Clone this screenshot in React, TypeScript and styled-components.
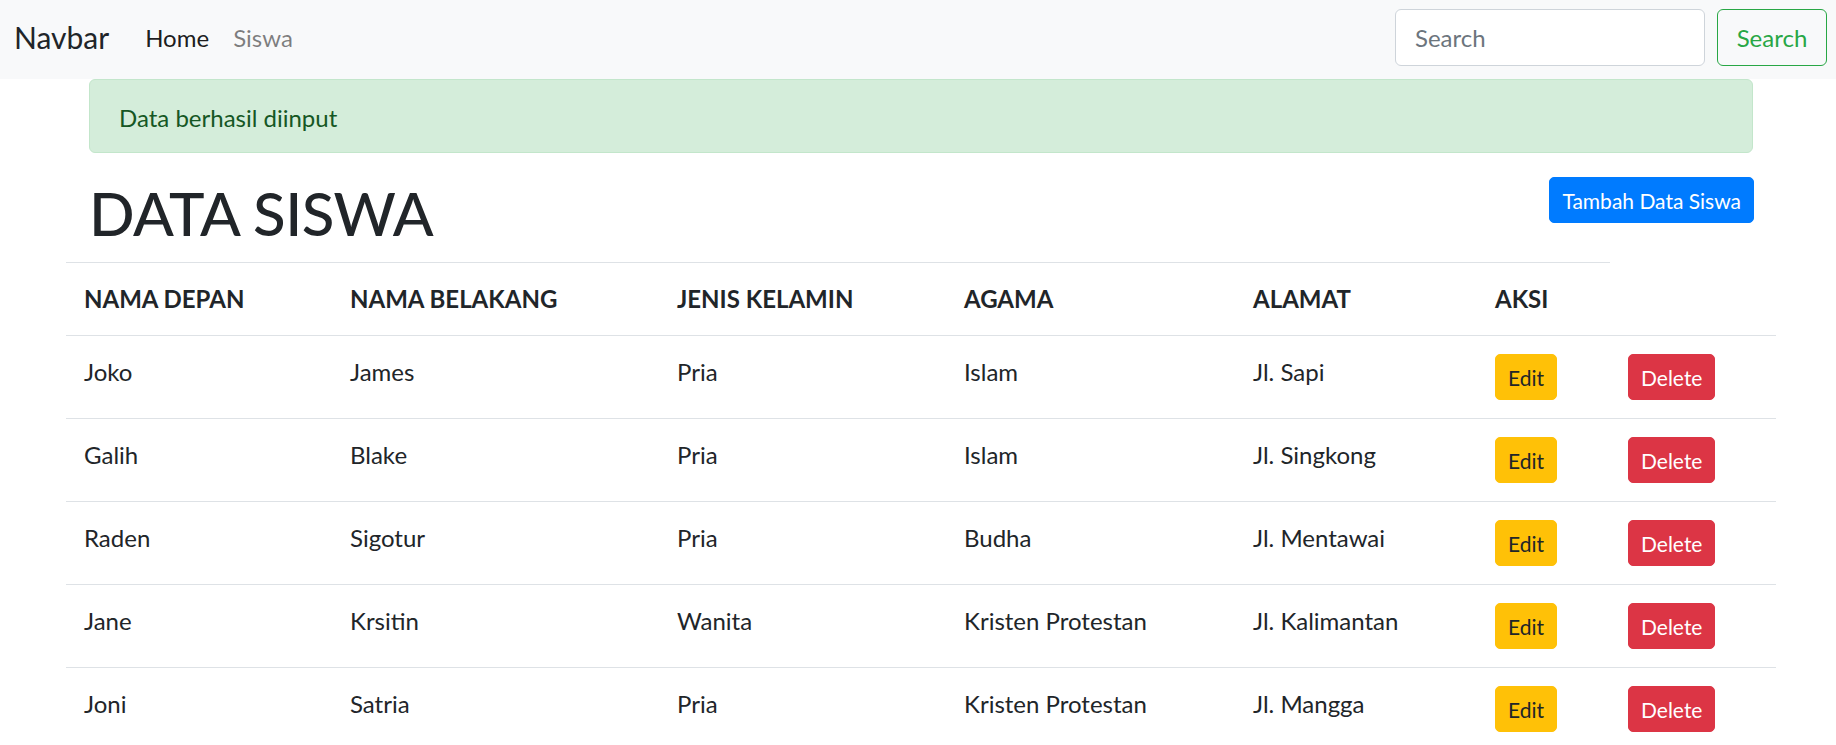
import React from "react";
import styled, { createGlobalStyle } from "styled-components";

const GlobalStyle = createGlobalStyle`
  html, body {
    margin: 0;
    padding: 0;
    overflow: hidden;
    background: #ffffff;
  }
  body {
    font-family: Lato, "Open Sans", "Noto Sans", sans-serif;
    font-size: 24px;
    line-height: 36px;
    color: #212529;
  }
  * { box-sizing: border-box; }
`;

const Navbar = styled.nav`
  display: flex;
  align-items: center;
  height: 79px;
  padding: 0 9px 4px 14px;
  background: #f8f9fa;
`;

const Brand = styled.a`
  font-size: 30px;
  line-height: 45px;
  color: #212529;
  margin-right: 24px;
  text-decoration: none;
`;

const NavLinks = styled.div`
  display: flex;
`;

const NavLink = styled.a<{ $active?: boolean }>`
  padding: 0 12px;
  font-size: 24px;
  line-height: 36px;
  text-decoration: none;
  color: ${(p) => (p.$active ? "rgba(0,0,0,0.9)" : "rgba(0,0,0,0.5)")};
`;

const SearchForm = styled.form`
  display: flex;
  gap: 12px;
  margin-left: auto;
`;

const SearchInput = styled.input`
  width: 310px;
  height: 57px;
  padding: 0 19px;
  font-family: inherit;
  font-size: 24px;
  color: #495057;
  background: #fff;
  border: 1px solid #ced4da;
  border-radius: 6px;
  outline: none;
  &::placeholder {
    color: #6c757d;
  }
`;

const OutlineButton = styled.button`
  width: 110px;
  height: 57px;
  padding: 0;
  font-family: inherit;
  font-size: 24px;
  color: #28a745;
  background: transparent;
  border: 1px solid #28a745;
  border-radius: 6px;
`;

const Alert = styled.div`
  margin: 0 83px 24px 89px;
  padding: 20px 29px 16px;
  background: #d4edda;
  border: 1px solid #c3e6cb;
  border-radius: 6px;
  color: #155724;
  font-size: 24px;
  line-height: 36px;
`;

const HeaderRow = styled.div`
  display: flex;
  justify-content: space-between;
  align-items: flex-start;
  margin: 0 82px 13px 89px;
`;

const Title = styled.h1`
  margin: 0;
  font-size: 60px;
  line-height: 72px;
  font-weight: 500;
  letter-spacing: -0.5px;
  color: #212529;
`;

const SmallButton = styled.button<{ $variant: "primary" | "warning" | "danger" }>`
  height: 46px;
  padding: 0 12px;
  font-family: inherit;
  font-size: 21px;
  line-height: 31px;
  border-radius: 5px;
  border: 1px solid
    ${(p) => (p.$variant === "primary" ? "#007bff" : p.$variant === "warning" ? "#ffc107" : "#dc3545")};
  background: ${(p) => (p.$variant === "primary" ? "#007bff" : p.$variant === "warning" ? "#ffc107" : "#dc3545")};
  color: ${(p) => (p.$variant === "warning" ? "#212529" : "#ffffff")};
`;

const Table = styled.table`
  margin-left: 66px;
  width: 1710px;
  border-collapse: collapse;
  table-layout: fixed;
`;

const HeadCell = styled.th`
  padding: 18px;
  text-align: left;
  vertical-align: top;
  font-weight: 700;
  font-size: 24px;
  line-height: 36px;
  border-top: 1px solid #dee2e6;
`;

const Cell = styled.td`
  padding: 18px;
  vertical-align: top;
  font-size: 24px;
  line-height: 36px;
  border-top: 1px solid #dee2e6;
`;

const columns = [266, 327, 287, 289, 242, 133, 166];

const students = [
  ["Joko", "James", "Pria", "Islam", "Jl. Sapi"],
  ["Galih", "Blake", "Pria", "Islam", "Jl. Singkong"],
  ["Raden", "Sigotur", "Pria", "Budha", "Jl. Mentawai"],
  ["Jane", "Krsitin", "Wanita", "Kristen Protestan", "Jl. Kalimantan"],
  ["Joni", "Satria", "Pria", "Kristen Protestan", "Jl. Mangga"],
];

export default function App() {
  return (
    <>
      <GlobalStyle />
      <Navbar>
        <Brand href="#">Navbar</Brand>
        <NavLinks>
          <NavLink $active href="#">Home</NavLink>
          <NavLink href="#">Siswa</NavLink>
        </NavLinks>
        <SearchForm onSubmit={(e) => e.preventDefault()}>
          <SearchInput type="search" placeholder="Search" />
          <OutlineButton type="submit">Search</OutlineButton>
        </SearchForm>
      </Navbar>
      <Alert>Data berhasil diinput</Alert>
      <HeaderRow>
        <Title>DATA SISWA</Title>
        <SmallButton $variant="primary">Tambah Data Siswa</SmallButton>
      </HeaderRow>
      <Table>
        <colgroup>
          {columns.map((w, i) => (
            <col key={i} style={{ width: w }} />
          ))}
        </colgroup>
        <thead>
          <tr>
            <HeadCell>NAMA DEPAN</HeadCell>
            <HeadCell>NAMA BELAKANG</HeadCell>
            <HeadCell>JENIS KELAMIN</HeadCell>
            <HeadCell>AGAMA</HeadCell>
            <HeadCell>ALAMAT</HeadCell>
            <HeadCell>AKSI</HeadCell>
          </tr>
        </thead>
        <tbody>
          {students.map((s, i) => (
            <tr key={i}>
              {s.map((v, j) => (
                <Cell key={j}>{v}</Cell>
              ))}
              <Cell>
                <SmallButton $variant="warning">Edit</SmallButton>
              </Cell>
              <Cell>
                <SmallButton $variant="danger">Delete</SmallButton>
              </Cell>
            </tr>
          ))}
        </tbody>
      </Table>
    </>
  );
}
